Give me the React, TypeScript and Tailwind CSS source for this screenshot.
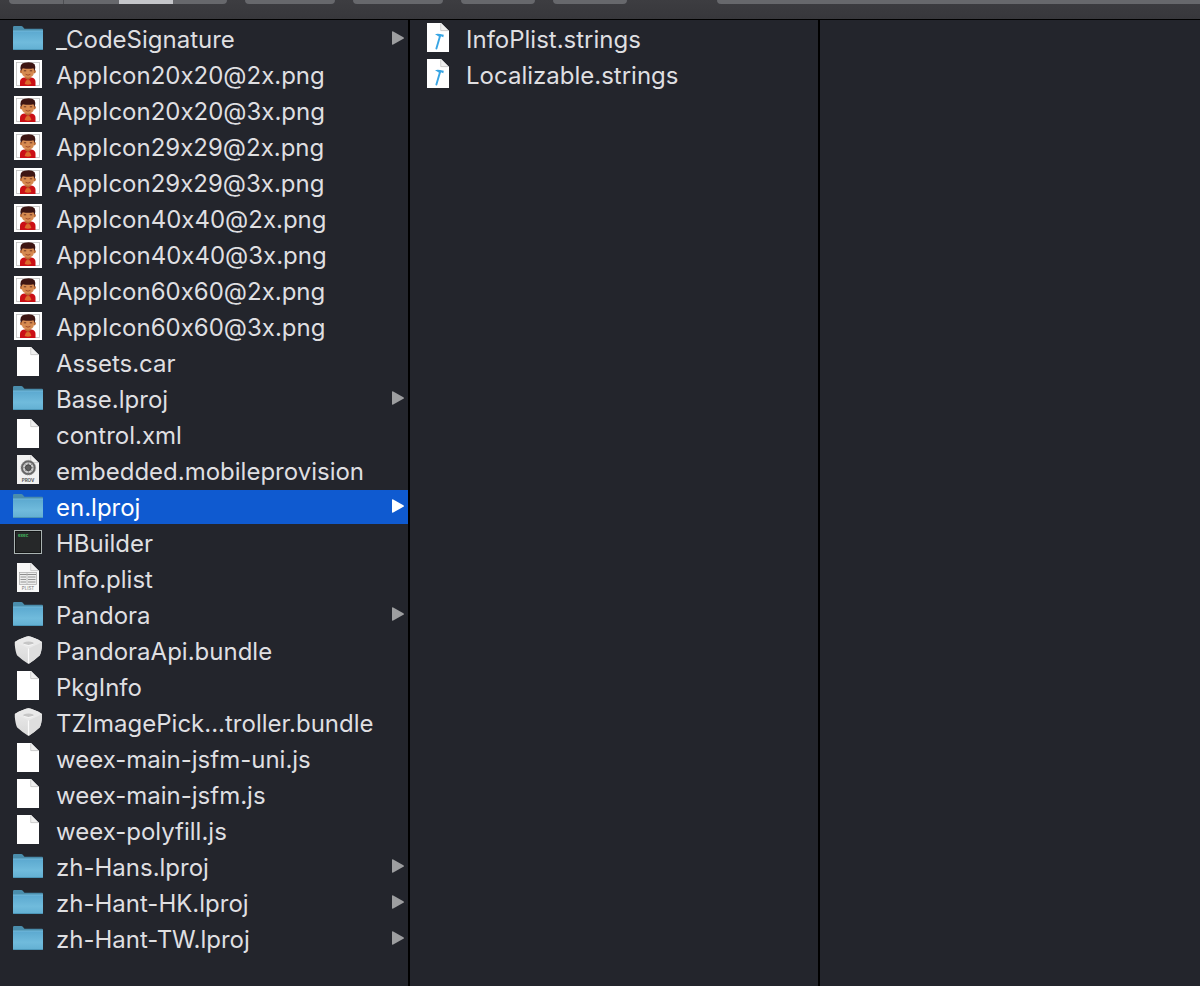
import React from "react";

type Kind = "folder" | "image" | "file" | "provision" | "exec" | "plist" | "bundle" | "strings";

interface Entry {
  name: string;
  kind: Kind;
  selected?: boolean;
}

const appEntries: Entry[] = [
  { name: "_CodeSignature", kind: "folder" },
  { name: "AppIcon20x20@2x.png", kind: "image" },
  { name: "AppIcon20x20@3x.png", kind: "image" },
  { name: "AppIcon29x29@2x.png", kind: "image" },
  { name: "AppIcon29x29@3x.png", kind: "image" },
  { name: "AppIcon40x40@2x.png", kind: "image" },
  { name: "AppIcon40x40@3x.png", kind: "image" },
  { name: "AppIcon60x60@2x.png", kind: "image" },
  { name: "AppIcon60x60@3x.png", kind: "image" },
  { name: "Assets.car", kind: "file" },
  { name: "Base.lproj", kind: "folder" },
  { name: "control.xml", kind: "file" },
  { name: "embedded.mobileprovision", kind: "provision" },
  { name: "en.lproj", kind: "folder", selected: true },
  { name: "HBuilder", kind: "exec" },
  { name: "Info.plist", kind: "plist" },
  { name: "Pandora", kind: "folder" },
  { name: "PandoraApi.bundle", kind: "bundle" },
  { name: "PkgInfo", kind: "file" },
  { name: "TZImagePick...troller.bundle", kind: "bundle" },
  { name: "weex-main-jsfm-uni.js", kind: "file" },
  { name: "weex-main-jsfm.js", kind: "file" },
  { name: "weex-polyfill.js", kind: "file" },
  { name: "zh-Hans.lproj", kind: "folder" },
  { name: "zh-Hant-HK.lproj", kind: "folder" },
  { name: "zh-Hant-TW.lproj", kind: "folder" },
];

const langEntries: Entry[] = [
  { name: "InfoPlist.strings", kind: "strings" },
  { name: "Localizable.strings", kind: "strings" },
];

function Sheet({ fill = "#ffffff" }: { fill?: string }) {
  return (
    <>
      <path d="M5 1H19L27 9V30H5Z" fill={fill} />
      <path d="M19 1V9H27Z" fill="#f0f0f0" />
      <path d="M18.7 1.5V8.6H26" fill="none" stroke="#bdbdbd" strokeWidth=".7" />
    </>
  );
}

function FolderIcon() {
  return (
    <>
      <defs>
        <linearGradient id="folder-front" x1="0" y1="0" x2="0" y2="1">
          <stop offset="0" stopColor="#5ba8cf" />
          <stop offset=".6" stopColor="#70bbdc" />
          <stop offset="1" stopColor="#62afd2" />
        </linearGradient>
      </defs>
      <path d="M1 8V5.2Q1 4 2.2 4H9.2Q10.2 4 10.8 4.8L12 6.3Q12.4 6.8 13.2 6.8H30Q31 6.8 31 7.8V12H1Z" fill="#4a8dac" />
      <path d="M1 8.8H31V27Q31 28 30 28H2Q1 28 1 27Z" fill="url(#folder-front)" />
      <path d="M1 9H31" stroke="#83c6e2" strokeWidth=".6" />
      <path d="M1.4 27.5H30.6" stroke="#4a93b4" strokeWidth=".9" />
    </>
  );
}

function ImageIcon() {
  return (
    <>
      <rect x="2" y="2" width="28" height="28" fill="#ffffff" />
      <rect x="4.5" y="4.5" width="23" height="23" fill="#ffffff" stroke="#bdbdbd" strokeWidth=".8" />
      <path d="M8 28V24Q8 20 12 19.5H19.5Q23.5 20 23.5 24V28Z" fill="#cb1016" />
      <path d="M13.2 17H18.6V20.4L16 22L13.2 20.4Z" fill="#b9642f" />
      <ellipse cx="9.3" cy="13.6" rx="1.3" ry="1.8" fill="#b96a37" />
      <ellipse cx="22.5" cy="13.6" rx="1.3" ry="1.8" fill="#b96a37" />
      <path d="M9.8 8H22V14.5Q21.5 19.3 16 19.7Q10.3 19.3 9.8 14.5Z" fill="#d68a50" />
      <path d="M8.9 13Q7 5.6 12.6 4.7Q20 3.4 22.6 6.3Q24 9 22.9 13L21.4 10.2Q17 11.4 10.8 10.2Z" fill="#3d1513" />
      <path d="M11.8 12.8H14.2M17.8 12.8H20.2" stroke="#6d3320" strokeWidth="1" />
      <path d="M13.6 16.3Q16 18 18.4 16.3" stroke="#9c4526" strokeWidth=".9" fill="none" />
      <path d="M12.6 26L14 22.6Q16 21.4 18 22.6L19.4 26Q16 27.6 12.6 26Z" fill="#dc6b2c" />
    </>
  );
}

function ProvisionIcon() {
  return (
    <>
      <Sheet fill="#f1f1f1" />
      <circle cx="16.3" cy="13.7" r="6.4" fill="#cfcfcf" stroke="#666666" strokeWidth="2" />
      <circle cx="16.3" cy="13.7" r="7.4" fill="none" stroke="#9a9a9a" strokeWidth=".8" strokeDasharray="1 1" />
      <path d="M16.3 8V11M16.3 16.4V19.4M10.6 13.7H13.4M19.2 13.7H22M12.3 9.7L14.3 11.7M20.3 9.7L18.3 11.7M12.3 17.7L14.3 15.7M20.3 17.7L18.3 15.7" stroke="#8a8a8a" strokeWidth=".9" />
      <circle cx="16.3" cy="13.7" r="2.9" fill="#5d5d5d" stroke="#444444" strokeWidth="1" />
      <text x="16" y="28" textAnchor="middle" fontSize="4.5" fontWeight="700" fill="#555555">PROV</text>
    </>
  );
}

function ExecIcon() {
  return (
    <>
      <rect x="2.5" y="4.5" width="27" height="23" fill="#262829" stroke="#aab3b2" />
      <rect x="3.5" y="5.5" width="25" height="21" fill="none" stroke="#131515" />
      <text x="6" y="11" fontSize="4.5" fontWeight="700" fill="#42b35d">exec</text>
    </>
  );
}

function PlistIcon() {
  return (
    <>
      <Sheet fill="#f8f8f8" />
      <rect x="7.5" y="10.5" width="17" height="12" fill="#ededed" stroke="#a5a5a5" strokeWidth=".7" />
      <path d="M8 12.5H24" stroke="#8d8d8d" strokeWidth="1" />
      <path d="M8.5 15H14M8.5 17.5H14M8.5 20H14M16 15H23.5M16 17.5H23.5M16 20H23.5" stroke="#969696" strokeWidth="1.1" />
      <path d="M15 10.5V22.5" stroke="#b5b5b5" strokeWidth=".8" />
      <text x="16" y="28" textAnchor="middle" fontSize="4.5" fill="#777777">PLIST</text>
    </>
  );
}

function BundleIcon() {
  return (
    <>
      <defs>
        <linearGradient id="bundle-left" x1="0" y1="0" x2="0" y2="1">
          <stop offset="0" stopColor="#ececec" />
          <stop offset="1" stopColor="#d8d8d8" />
        </linearGradient>
      </defs>
      <path d="M2.8 8L7 5.4L14 2.8Q16.5 1.8 19 2.8L26 5.4L30 8V11Q29.6 18 27.6 21.6Q22 26.8 16.5 30Q10.6 26.6 5.2 21.6Q3.4 18 2.8 11Z" fill="url(#bundle-left)" />
      <path d="M30 8L16.5 14.4V30Q22 26.8 27.6 21.6Q29.6 18 30 11Z" fill="#dedede" />
      <path d="M2.8 8L7 5.4L14 2.8Q16.5 1.8 19 2.8L26 5.4L30 8L16.5 14.4Z" fill="#e9e9e9" />
      <path d="M16.5 14.4V29" stroke="#fbfbfb" strokeWidth="1.2" />
      <path d="M11.5 8.6Q16.5 6.6 21.4 8.6V10Q16.5 12.2 11.5 10Z" fill="#c6c6c6" />
      <path d="M11.8 10.4Q16.5 12.6 21.2 10.4" stroke="#fafafa" strokeWidth=".8" fill="none" />
    </>
  );
}

function StringsIcon() {
  return (
    <>
      <Sheet />
      <path d="M18.2 13.4L14.4 26.6" stroke="#38a5e4" strokeWidth="1.9" strokeLinecap="round" />
      <path d="M13 12.6Q15 11 18 12.1L21.8 12.7L21.3 15.2L19 14.2L16.6 14.4Q14.8 13.2 13 12.6Z" fill="#38a5e4" />
    </>
  );
}

const icons: Record<Kind, () => React.JSX.Element> = {
  folder: FolderIcon,
  image: ImageIcon,
  file: () => <Sheet />,
  provision: ProvisionIcon,
  exec: ExecIcon,
  plist: PlistIcon,
  bundle: BundleIcon,
  strings: StringsIcon,
};

function Row({ entry }: { entry: Entry }) {
  const Drawing = icons[entry.kind];
  return (
    <li>
      <button
        type="button"
        className={`flex h-[34px] w-full items-center pl-3 pr-1 text-left text-2xl ${
          entry.selected ? "bg-[#0f5ad0] text-white" : "text-[#dfdfe1]"
        }`}
      >
        <svg viewBox="0 0 32 32" className="mr-3 size-8 shrink-0 self-start" aria-hidden="true">
          <Drawing />
        </svg>
        <span className="min-w-0 flex-1 truncate pt-0.5">{entry.name}</span>
        {entry.kind === "folder" && (
          <svg viewBox="0 0 12 16" className="mb-0.5 h-4 w-3 shrink-0" aria-hidden="true">
            <path d="M0 2Q0 .8 1.2 1.4L11.4 7.2Q12.6 8 11.4 8.8L1.2 14.6Q0 15.2 0 14Z" fill={entry.selected ? "#ffffff" : "#9d9ea0"} />
          </svg>
        )}
      </button>
    </li>
  );
}

function Column({ entries, label }: { entries: Entry[]; label: string }) {
  return (
    <section aria-label={label} className="w-[410px] shrink-0 border-r-2 border-black pt-0.5">
      <ul className="flex flex-col gap-0.5">
        {entries.map((entry) => (
          <Row key={entry.name} entry={entry} />
        ))}
      </ul>
    </section>
  );
}

export default function App() {
  return (
    <div className="flex min-h-screen flex-col overflow-hidden bg-[#23252c] font-['Inter','Liberation_Sans',sans-serif] [font-feature-settings:'calt'_0]">
      <header className="flex h-5 items-start gap-[18px] border-b border-black bg-linear-to-b from-[#3d3d41] to-[#37373b] pl-[9px]">
        <div className="flex h-1 w-[218px] shrink-0 overflow-hidden rounded-b bg-[#67686c]">
          <button type="button" aria-label="Icons" className="flex-1 border-r border-[#4d4e52]" />
          <button type="button" aria-label="List" className="flex-1" />
          <button type="button" aria-label="Columns" className="flex-1 bg-[#c5c6ca]" />
          <button type="button" aria-label="Gallery" className="flex-1" />
        </div>
        <button type="button" aria-label="Group" className="h-1 w-[90px] shrink-0 rounded-b bg-[#67686c]" />
        <button type="button" aria-label="Action" className="h-1 w-[90px] shrink-0 rounded-b bg-[#67686c]" />
        <button type="button" aria-label="Share" className="h-1 w-[74px] shrink-0 rounded-b bg-[#67686c]" />
        <button type="button" aria-label="Tags" className="h-1 w-[74px] shrink-0 rounded-b bg-[#67686c]" />
        <input type="search" aria-label="Search" className="ml-[72px] h-1 min-w-0 flex-1 rounded-bl bg-[#67686c]" />
      </header>
      <main className="flex flex-1">
        <Column entries={appEntries} label="Application contents" />
        <Column entries={langEntries} label="en.lproj" />
        <section aria-label="Preview" className="flex-1" />
      </main>
    </div>
  );
}
